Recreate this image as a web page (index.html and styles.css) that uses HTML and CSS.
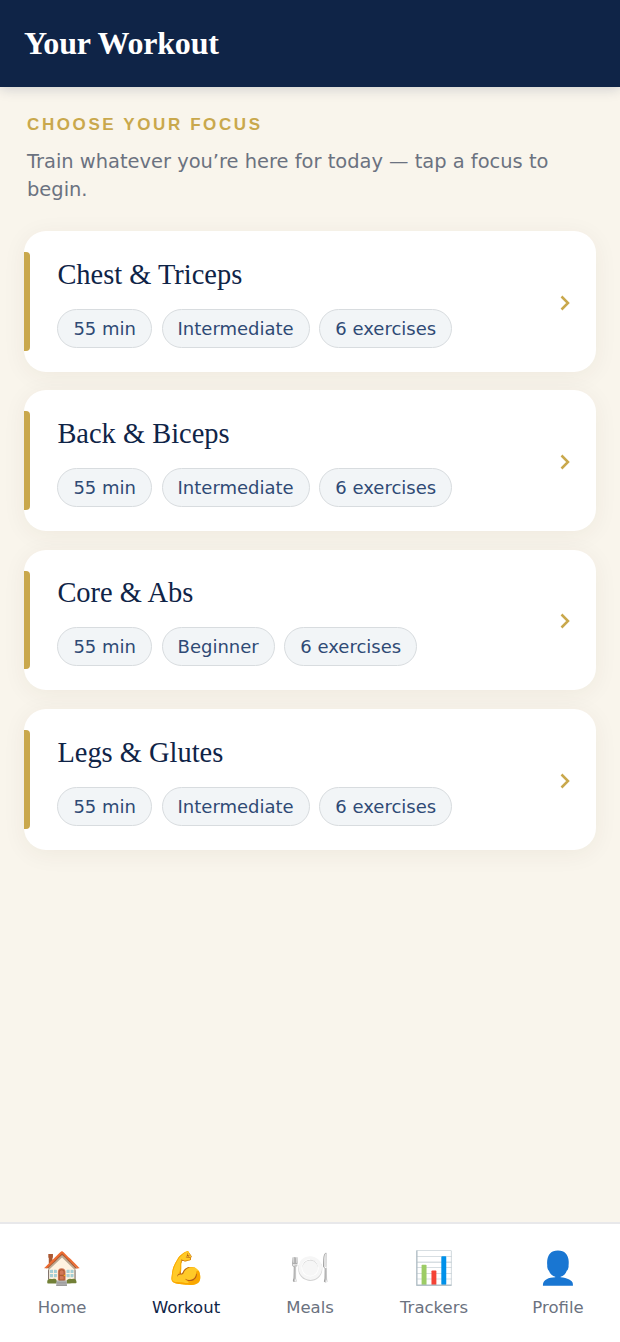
FILE: index.html
```html
<!DOCTYPE html>
<html lang="en">
<head>
  <meta charset="utf-8">
  <title>Your Workout</title>
  <link rel="stylesheet" href="styles.css">
</head>
<body>
  <div class="app">
    <header class="topbar">
      <h1>Your Workout</h1>
    </header>
    <main class="content">
      <p class="eyebrow">Choose your focus</p>
      <p class="lead">Train whatever you’re here for today — tap a focus to begin.</p>
      <div class="cards">
        <a class="card">
          <div class="card-body">
            <h2>Chest &amp; Triceps</h2>
            <div class="pills">
              <span class="pill">55 min</span>
              <span class="pill">Intermediate</span>
              <span class="pill">6 exercises</span>
            </div>
          </div>
          <svg class="chevron" viewBox="0 0 10 16" width="10" height="16"><path d="M1.5 1.5 8 8l-6.500 6.500"/></svg>
        </a>
        <a class="card">
          <div class="card-body">
            <h2>Back &amp; Biceps</h2>
            <div class="pills">
              <span class="pill">55 min</span>
              <span class="pill">Intermediate</span>
              <span class="pill">6 exercises</span>
            </div>
          </div>
          <svg class="chevron" viewBox="0 0 10 16" width="10" height="16"><path d="M1.5 1.5 8 8l-6.500 6.500"/></svg>
        </a>
        <a class="card">
          <div class="card-body">
            <h2>Core &amp; Abs</h2>
            <div class="pills">
              <span class="pill">55 min</span>
              <span class="pill">Beginner</span>
              <span class="pill">6 exercises</span>
            </div>
          </div>
          <svg class="chevron" viewBox="0 0 10 16" width="10" height="16"><path d="M1.5 1.5 8 8l-6.500 6.500"/></svg>
        </a>
        <a class="card">
          <div class="card-body">
            <h2>Legs &amp; Glutes</h2>
            <div class="pills">
              <span class="pill">55 min</span>
              <span class="pill">Intermediate</span>
              <span class="pill">6 exercises</span>
            </div>
          </div>
          <svg class="chevron" viewBox="0 0 10 16" width="10" height="16"><path d="M1.5 1.5 8 8l-6.500 6.500"/></svg>
        </a>
      </div>
    </main>
    <nav class="tabbar">
      <a class="tab"><span class="tab-icon">🏠</span><span class="tab-label">Home</span></a>
      <a class="tab tab-active"><span class="tab-icon">💪</span><span class="tab-label">Workout</span></a>
      <a class="tab"><span class="tab-icon">🍽️</span><span class="tab-label">Meals</span></a>
      <a class="tab"><span class="tab-icon">📊</span><span class="tab-label">Trackers</span></a>
      <a class="tab"><span class="tab-icon">👤</span><span class="tab-label">Profile</span></a>
    </nav>
  </div>
</body>
</html>
```
FILE: styles.css
```css
* { box-sizing: border-box; }
html, body { margin: 0; height: 100%; }
body { font-family: "DejaVu Sans", sans-serif; background: #f9f5ec; color: #0f2447; }
.app { display: flex; flex-direction: column; height: 1342px; }

.topbar { height: 87px; padding: 0 24px; display: flex; align-items: center; background: #0f2447; box-shadow: 0 2px 12px rgba(15, 36, 71, 0.18); }
.topbar h1 { margin: 0; font-family: "Liberation Serif", serif; font-size: 32px; font-weight: 700; letter-spacing: -0.2px; color: #fff; }

.content { flex: 1; padding: 28px 24px 0; }
.eyebrow { margin: 0 3px 13px; font-family: "Liberation Sans", sans-serif; font-size: 17px; font-weight: 700; line-height: 20px; letter-spacing: 2.600px; text-transform: uppercase; color: #c9a84c; }
.lead { margin: 0 3px 27px; font-size: 19.450px; line-height: 28px; color: #6b7280; }

.cards { display: flex; flex-direction: column; gap: 18.500px; }
.card { position: relative; display: flex; align-items: center; height: 140.800px; padding: 0 26px 0 33.400px; background: #fff; border-radius: 22px; box-shadow: 0 4px 24px rgba(60, 50, 10, 0.06); }
.card::before { content: ""; position: absolute; left: 0; top: 15%; bottom: 15%; width: 6px; background: #c9a84c; border-radius: 0 4px 4px 0; }
.card-body { flex: 1; padding-top: 3px; }
.card h2 { margin: 0 0 17px; font-family: "Liberation Serif", serif; font-size: 28.450px; font-weight: 400; line-height: 34px; color: #0f2447; }
.pills { display: flex; gap: 9.600px; }
.pill { padding: 0 15px; height: 39px; display: flex; align-items: center; font-size: 18px; color: #2f4a75; background: #f2f5f7; border: 1.500px solid #d8dcdf; border-radius: 20px; }
.chevron { flex: none; margin-top: 3px; fill: none; stroke: #c9a84c; stroke-width: 2.500; }

.tabbar { height: 120px; display: flex; padding-top: 20px; background: #fff; border-top: 2px solid #e8e8ea; }
.tab { flex: 1; display: flex; flex-direction: column; align-items: center; color: #6b7280; }
.tab-icon { font-size: 32px; line-height: 48px; font-family: "Noto Color Emoji", sans-serif; }
.tab-label { font-size: 16.500px; line-height: 22px; margin-top: 5px; }
.tab-active { color: #0f2447; }
```
